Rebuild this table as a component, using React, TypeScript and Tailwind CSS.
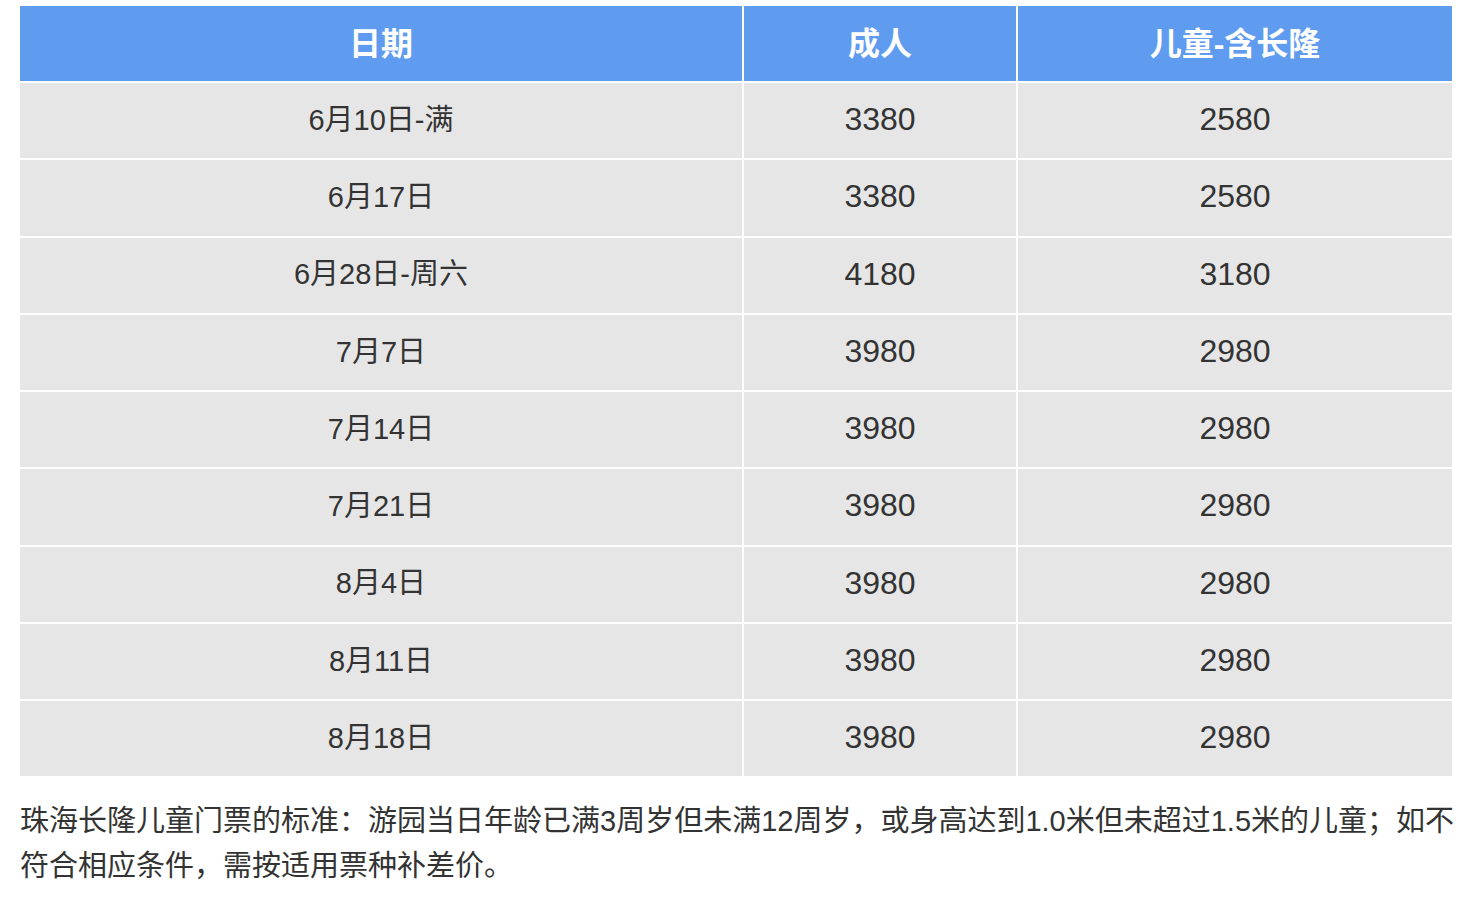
import React from "react";

const rows: [string, string, string][] = [
  ["6月10日-满", "3380", "2580"],
  ["6月17日", "3380", "2580"],
  ["6月28日-周六", "4180", "3180"],
  ["7月7日", "3980", "2980"],
  ["7月14日", "3980", "2980"],
  ["7月21日", "3980", "2980"],
  ["8月4日", "3980", "2980"],
  ["8月11日", "3980", "2980"],
  ["8月18日", "3980", "2980"],
];

const font = { fontFamily: '"Liberation Sans", "Noto Sans CJK SC", sans-serif' };

export default function App() {
  return (
    <div className="min-h-screen bg-white pt-[6px] pl-[20px]" style={font}>
      <div className="w-[1432px] flex flex-col gap-[2px]">
        <div className="grid grid-cols-[722px_272px_434px] gap-x-[2px] h-[75px]">
          {["日期", "成人", "儿童-含长隆"].map((h) => (
            <div key={h} className="bg-[#5f9cef] flex items-center justify-center text-white font-bold text-[32px]">
              {h}
            </div>
          ))}
        </div>
        {rows.map((r, i) => (
          <div key={i} className="grid grid-cols-[722px_272px_434px] gap-x-[2px] h-[75.25px]">
            <div className="bg-[#e6e6e6] flex items-center justify-center text-[#333333] text-[29px]">{r[0]}</div>
            <div className="bg-[#e6e6e6] flex items-center justify-center text-[#333333] text-[32px] pb-[3px]">{r[1]}</div>
            <div className="bg-[#e6e6e6] flex items-center justify-center text-[#333333] text-[32px] pb-[3px]">{r[2]}</div>
          </div>
        ))}
      </div>
      <p className="w-[1440px] mt-[23px] text-[29px] leading-[45px] text-[#333333]">
        珠海长隆儿童门票的标准：游园当日年龄已满3周岁但未满12周岁，或身高达到1.0米但未超过1.5米的儿童；如不符合相应条件，需按适用票种补差价。
      </p>
    </div>
  );
}
